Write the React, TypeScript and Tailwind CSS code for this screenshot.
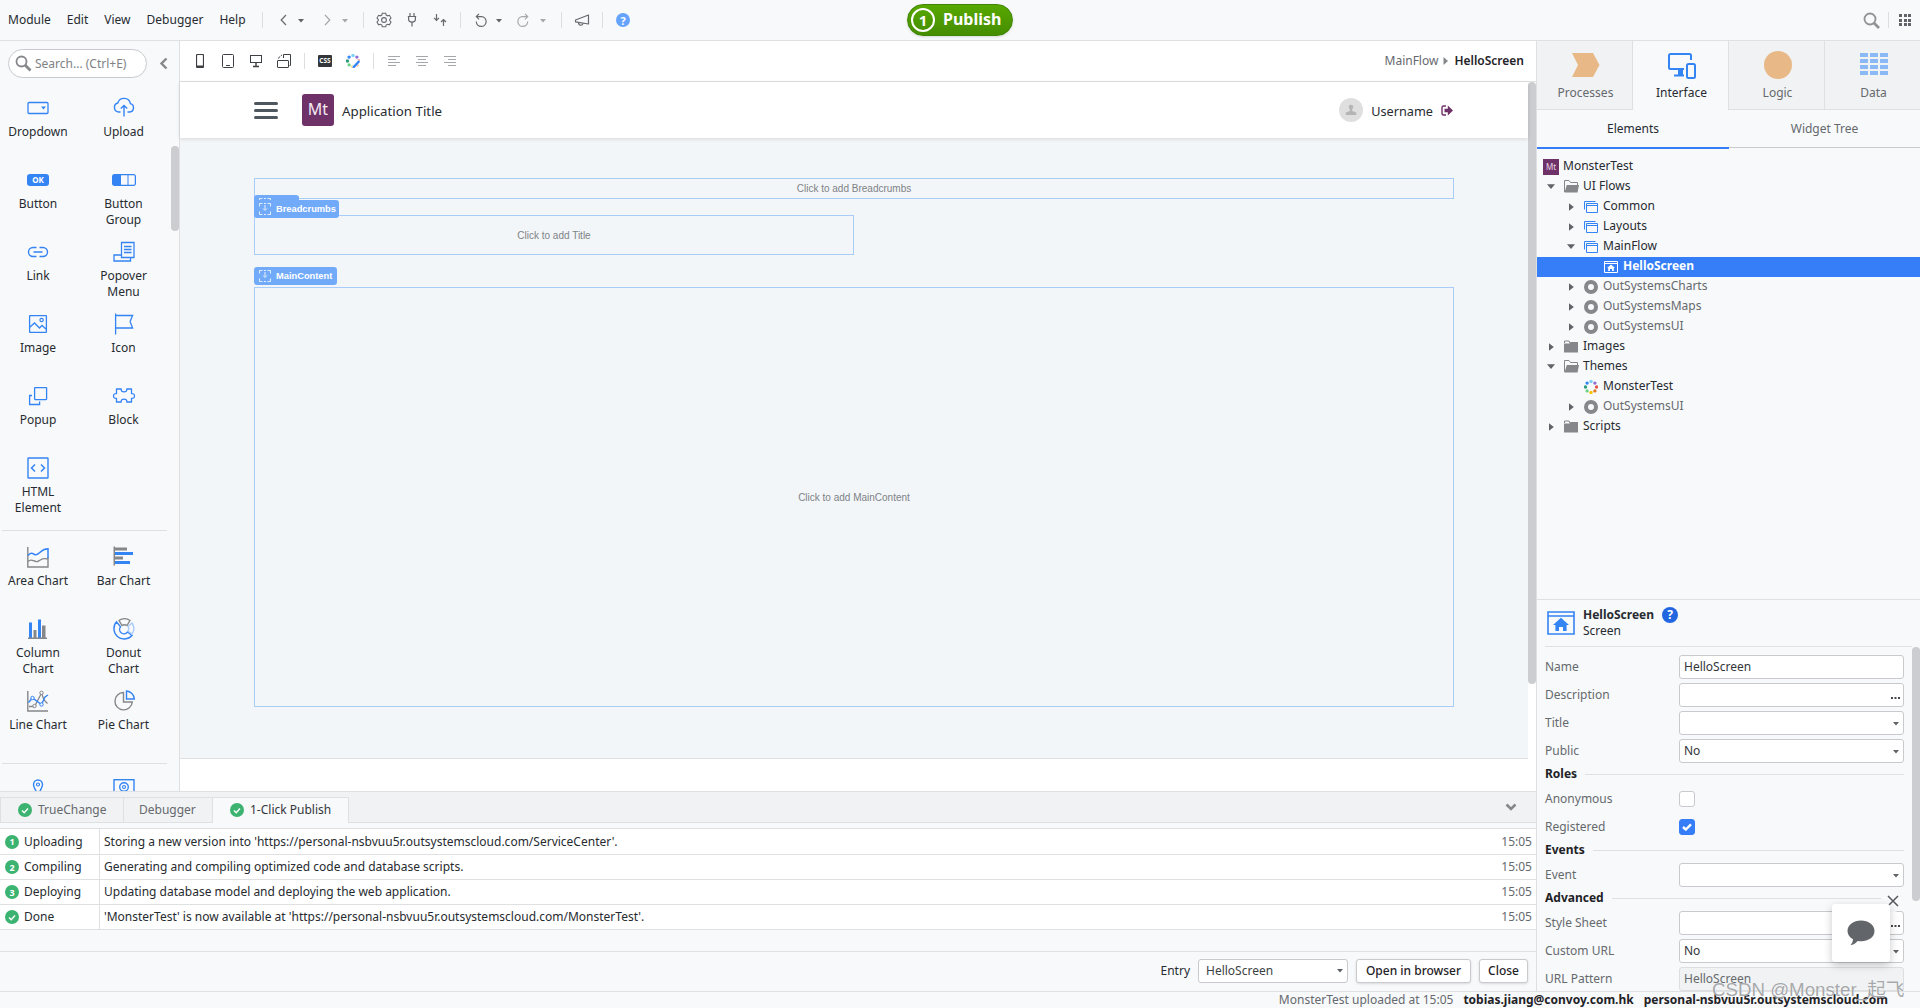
import React from "react";

type SvgProps = { w?: number; h?: number; box?: string; className?: string; children: React.ReactNode };

function Svg({ w = 24, h = 24, box, className = "", children }: SvgProps) {
  return (
    <svg width={w} height={h} viewBox={box ?? `0 0 ${w} ${h}`} fill="none" className={`block shrink-0 ${className}`}>
      {children}
    </svg>
  );
}

const BLUE = "#3584f4";
const GRAY = "#85878b";

/* ---------- top bar ---------- */

function Caret({ color = "#5f6368" }: { color?: string }) {
  return (
    <Svg w={6} h={5}>
      <path d="M0 1h6L3 4.600z" fill={color} />
    </Svg>
  );
}

function Slot({ w, children }: { w: string; children?: React.ReactNode }) {
  return <div className={`flex h-full shrink-0 items-center justify-center ${w}`}>{children}</div>;
}

function Sep() {
  return <div className="h-4 w-px shrink-0 bg-[#dcdee0]" />;
}

function UndoIcon({ color, flip }: { color: string; flip?: boolean }) {
  return (
    <Svg w={14} h={14} className={flip ? "-scale-x-100" : ""}>
      <path d="M5 .8L2.300 3.600 5 6.400M2.500 3.600H7.500a4.900 4.900 0 11-5.200 5" stroke={color} strokeWidth="1.200" />
    </Svg>
  );
}

function TopBar() {
  return (
    <header className="flex h-[41px] shrink-0 items-center border-b border-[#dee0e2] bg-[#f7f9fb]">
      <nav className="flex w-[262px] shrink-0 items-center gap-4 pb-px pl-2">
        <span>Module</span>
        <span>Edit</span>
        <span>View</span>
        <span>Debugger</span>
        <span>Help</span>
      </nav>
      <Sep />
      <div className="flex h-full w-[100px] items-center">
        <Slot w="w-[35px] pl-[5px]">
          <Svg w={7} h={12}><path d="M6 1L1.200 6 6 11" stroke="#66696d" strokeWidth="1.200" /></Svg>
        </Slot>
        <Caret />
        <Slot w="w-[38px] pl-[8px]">
          <Svg w={7} h={12}><path d="M1 1l4.800 5L1 11" stroke="#a5a7aa" strokeWidth="1.200" /></Svg>
        </Slot>
        <Caret color="#a5a7aa" />
      </div>
      <Sep />
      <div className="flex h-full w-[96px] items-center pl-[6px]">
        <Slot w="w-7">
          <Svg w={16} h={16}>
            <path d="M6.300 1.200h3.400l.5 1.900 1.300.7 1.900-.5 1.600 2.800-1.300 1.400v1.100l1.300 1.400-1.600 2.800-1.900-.5-1.300.7-.5 1.800H6.300l-.5-1.800-1.300-.7-1.900.5L1 10l1.300-1.400V7.500L1 6.100l1.600-2.800 1.900.5 1.300-.7z" stroke="#66696d" strokeWidth="1.100" />
            <circle cx="8" cy="8" r="2.400" stroke="#66696d" strokeWidth="1.100" />
          </Svg>
        </Slot>
        <Slot w="w-7">
          <Svg w={10} h={14}>
            <path d="M3 0v3.500M7 0v3.500M.8 3.500h8.400M1.600 3.500v3Q1.600 9 5 9.200 8.400 9 8.400 6.500v-3M5 9.200V13.500" stroke="#66696d" strokeWidth="1.200" />
          </Svg>
        </Slot>
        <Slot w="w-7">
          <Svg w={14} h={14}>
            <path d="M3.500 1v6M1 4.800L3.500 7.300 6 4.800M10.500 13V6.500M8 9l2.500-2.500L13 9" stroke="#66696d" strokeWidth="1.200" />
          </Svg>
        </Slot>
      </div>
      <Sep />
      <div className="flex h-full w-[100px] items-center">
        <Slot w="w-[35px] pl-[5px]"><UndoIcon color="#66696d" /></Slot>
        <Caret />
        <Slot w="w-[38px] pl-[3px]"><UndoIcon color="#a5a7aa" flip /></Slot>
        <Caret color="#a5a7aa" />
      </div>
      <Sep />
      <Slot w="w-10">
        <Svg w={16} h={14}>
          <path d="M1.500 7L14.500 2v9L1.500 8.800zM4.500 9.500c0 3.500 4 3.500 4.500.8" stroke="#66696d" strokeWidth="1.200" strokeLinejoin="round" />
        </Svg>
      </Slot>
      <Sep />
      <Slot w="w-10">
        <div className="flex size-[14px] items-center justify-center rounded-full bg-[#66a3fb] text-[11px] leading-none font-bold text-white">?</div>
      </Slot>
      <div className="ml-[264px] flex h-8 w-[106px] items-center rounded-full border border-[#418602] bg-gradient-to-b from-[#57a800] to-[#458d02] pl-[3px] text-white shadow-sm">
        <div className="flex size-6 items-center justify-center rounded-full border-2 border-white text-[15px] leading-none font-bold">1</div>
        <span className="ml-2 pb-[2px] text-[16px] leading-5 font-bold">Publish</span>
      </div>
      <div className="ml-auto flex items-center">
        <Svg w={17} h={17}>
          <circle cx="7" cy="7" r="5.500" stroke="#909295" strokeWidth="1.800" />
          <path d="M11 11l5 5" stroke="#909295" strokeWidth="2.600" />
        </Svg>
        <div className="mr-[10px] ml-2 h-4 w-px bg-[#dcdee0]" />
        <div className="mr-[9px] grid grid-cols-3 gap-[1.500px]">
          {Array.from({ length: 9 }, (_, i) => <i key={i} className="size-[3px] bg-[#606367]" />)}
        </div>
      </div>
    </header>
  );
}

/* ---------- widget palette ---------- */

const icons: Record<string, React.ReactNode> = {
  dropdown: (
    <Svg><rect x="2" y="6.500" width="20" height="11" rx="1" stroke={BLUE} strokeWidth="1.300" /><path d="M15 10.500h5L17.500 13.500z" fill={BLUE} /></Svg>
  ),
  upload: (
    <Svg><path d="M8.500 16H6.500a4.600 4.600 0 01-.7-9A6.500 6.500 0 0118.400 7.600 4.300 4.300 0 0117.700 16H15.500M12 20.500V9.800M8.800 12.600L12 9.500l3.200 3.100" stroke={BLUE} strokeWidth="1.400" /></Svg>
  ),
  button: (
    <div className="flex h-6 items-center"><div className="flex h-3 w-[22px] items-center justify-center rounded-[3px] bg-[#3584f4] text-[8px] leading-none font-bold text-white">OK</div></div>
  ),
  group: (
    <Svg><rect x=".6" y="6.600" width="22.800" height="10.800" rx="2" stroke={BLUE} strokeWidth="1.300" /><path d="M1 7h8v10H1zM15.500 7h1v10h-1z" fill={BLUE} /></Svg>
  ),
  link: (
    <Svg><path d="M10.500 7.500H7a4.500 4.500 0 000 9h3.500M13.500 7.500H17a4.500 4.500 0 010 9h-3.500M7.500 12h9" stroke={BLUE} strokeWidth="1.400" /></Svg>
  ),
  popover: (
    <Svg><path d="M9.500 2.500H22v15H9.500zM12 6.500h7.500M12 9.500h7.500M12 12.500h7.500M9.500 15H2v6h16.500v-3.500" stroke={BLUE} strokeWidth="1.300" /></Svg>
  ),
  image: (
    <Svg><rect x="3.600" y="3.600" width="16.800" height="16.800" rx=".5" stroke={BLUE} strokeWidth="1.300" /><path d="M4 15l4.500-4 5 5 2.500-2.500 4.500 4" stroke={BLUE} strokeWidth="1.300" /><circle cx="15.600" cy="8" r="1.700" stroke={BLUE} strokeWidth="1.200" /></Svg>
  ),
  flag: (
    <Svg><path d="M3.600 1.500v21M3.600 3.500h17l-2.500 6 2.500 6.500h-17" stroke={BLUE} strokeWidth="1.300" /></Svg>
  ),
  popup: (
    <Svg><rect x="8.600" y="3.600" width="12" height="12" rx=".5" stroke={BLUE} strokeWidth="1.300" /><path d="M6 11.500H3.600v9h10V17.500" stroke={BLUE} strokeWidth="1.300" /></Svg>
  ),
  block: (
    <Svg><path d="M4.500 5H9.200c-.3 2 1 2.800 2.800 2.800S15.100 7 14.800 5H19.500v4.600c2-.3 3 .9 3 2.400s-1 2.700-3 2.400V18H14.800c.3-2-1-2.800-2.800-2.800S8.900 16 9.200 18H4.500v-3.600c-2 .3-3-.9-3-2.400s1-2.700 3-2.400z" stroke={BLUE} strokeWidth="1.300" strokeLinejoin="round" /></Svg>
  ),
  html: (
    <Svg><rect x="2" y="2" width="20" height="20" rx=".5" stroke={BLUE} strokeWidth="1.400" /><path d="M9 8.500L5.500 12 9 15.500M15 8.500l3.500 3.500-3.500 3.500" stroke={BLUE} strokeWidth="1.500" /></Svg>
  ),
  area: (
    <Svg><path d="M1.800 2v20H22V12" stroke={GRAY} strokeWidth="1.400" /><path d="M2 10.500C4.500 7.500 6 8 8.500 9.500 13 11.500 13.500 4 22 3.800V13" stroke={BLUE} strokeWidth="1.500" /><path d="M2 16.500c4-4 5.500 1 9.500 0 4-1.500 4-4 10.500-2.500" stroke={GRAY} strokeWidth="1.400" /></Svg>
  ),
  bar: (
    <Svg><path d="M1.500 1.500h1.500v19H1.500zM3 2.500h12v3H3zM3 11.500h8v3H3z" fill={GRAY} /><path d="M3 7h18v3H3zM3 16h15v3H3z" fill={BLUE} /></Svg>
  ),
  column: (
    <Svg><path d="M3 5.500h3V21H3zM12 2.500h3V21h-3z" fill={BLUE} /><path d="M7.500 13h3v8h-3zM16 8.500h3.500V21H16zM2 20.500h19v1.500H2z" fill={GRAY} /></Svg>
  ),
  donut: (
    <Svg>
      <path d="M4.500 4.800A10 10 0 1020 18.500l-4.400-3.500A4.400 4.400 0 118.500 9.800z" stroke={BLUE} strokeWidth="1.400" />
      <path d="M7 3.500C10 1 15 1 18 3.500L15 8.500c-1.500-1-3.500-1-5 0z" stroke={GRAY} strokeWidth="1.400" />
      <path d="M20 6a9.500 9.500 0 010 11l-4-3c1-1.500 1-3 0-4.500z" stroke="#a9cbfb" strokeWidth="1.400" />
    </Svg>
  ),
  line: (
    <Svg><path d="M1.800 2v20H22" stroke={GRAY} strokeWidth="1.400" /><path d="M3 17.500h5.500L15.500 4 18 11l3.500 3.500" stroke={GRAY} strokeWidth="1.300" /><path d="M2.500 13.500L6.500 9l9 6.500L19 8l3-2" stroke={BLUE} strokeWidth="1.400" /><circle cx="6.500" cy="9" r="1.700" fill="#f7f9fb" stroke={BLUE} /><circle cx="15.500" cy="15.500" r="1.700" fill="#f7f9fb" stroke={BLUE} /><circle cx="8.500" cy="17" r="1.700" fill="#f7f9fb" stroke={GRAY} /><circle cx="15.500" cy="3.800" r="1.700" fill="#f7f9fb" stroke={GRAY} /></Svg>
  ),
  pie: (
    <Svg><path d="M11.500 3.500a8.700 8.700 0 108.800 9.500h-8.800z" stroke={GRAY} strokeWidth="1.400" /><path d="M14.500 2v8h7.800A8.500 8.500 0 0014.500 2z" stroke={BLUE} strokeWidth="1.400" /></Svg>
  ),
  pin: (
    <Svg><path d="M12 16c-3-4-4.500-7-4.500-9.500a4.500 4.500 0 019 0C16.500 9 15 12 12 16z" stroke={BLUE} strokeWidth="1.400" /><circle cx="12" cy="6.500" r="1.500" stroke={BLUE} strokeWidth="1.200" /></Svg>
  ),
  mapbox: (
    <Svg><rect x="2" y="1.700" width="20" height="17" stroke={BLUE} strokeWidth="1.400" /><circle cx="12" cy="9" r="4.300" stroke={BLUE} strokeWidth="1.400" /><circle cx="12" cy="9" r="1.500" stroke={BLUE} strokeWidth="1.200" /></Svg>
  ),
};

function Widget({ icon, label, tall }: { icon: string; label?: string; tall?: boolean }) {
  return (
    <div className={`flex flex-col items-center ${tall ? "h-[74px]" : "h-[72px]"}`}>
      {icons[icon]}
      {label && <span className="mt-1 max-w-[64px] text-center leading-4">{label}</span>}
    </div>
  );
}

const basic: [string, string][] = [
  ["dropdown", "Dropdown"], ["upload", "Upload"], ["button", "Button"], ["group", "Button Group"],
  ["link", "Link"], ["popover", "Popover Menu"], ["image", "Image"], ["flag", "Icon"],
  ["popup", "Popup"], ["block", "Block"],
];
const charts: [string, string][] = [
  ["area", "Area Chart"], ["bar", "Bar Chart"], ["column", "Column Chart"],
  ["donut", "Donut Chart"], ["line", "Line Chart"], ["pie", "Pie Chart"],
];

function Palette() {
  return (
    <aside className="relative flex w-[180px] shrink-0 flex-col overflow-hidden border-r border-[#dee0e2] bg-[#f7f9fb]">
      <div className="mt-2 ml-2 flex h-[29px] shrink-0 items-center">
        <div className="flex h-full w-[139px] items-center rounded-full border border-[#c8cacd] bg-white pl-[6px] text-[#808286]">
          <Svg w={17} h={17}>
            <circle cx="6.500" cy="6.500" r="5" stroke="#85878b" strokeWidth="1.800" />
            <path d="M10 10l5.500 5.500" stroke="#85878b" strokeWidth="2.800" />
          </Svg>
          <span className="ml-[3px]">Search... (Ctrl+E)</span>
        </div>
        <Svg w={9} h={13} className="ml-3"><path d="M7.500 1.500L2.500 6.500l5 5" stroke="#85878b" strokeWidth="2.400" /></Svg>
      </div>
      <div className="mt-[18px] grid shrink-0 grid-cols-[76px_95px]">
        {basic.map(([i, l]) => <Widget key={l} icon={i} label={l} />)}
        <Widget icon="html" label="HTML Element" tall />
      </div>
      <div className="ml-[2px] h-px w-[165px] shrink-0 bg-[#dee0e2]" />
      <div className="mt-[14px] grid shrink-0 grid-cols-[76px_95px]">
        {charts.map(([i, l]) => <Widget key={l} icon={i} label={l} />)}
      </div>
      <div className="mt-[2px] ml-[2px] h-px w-[165px] shrink-0 bg-[#dee0e2]" />
      <div className="mt-[14px] grid shrink-0 grid-cols-[76px_95px]">
        <Widget icon="pin" />
        <Widget icon="mapbox" />
      </div>
      <div className="absolute top-[105px] right-0 h-[85px] w-2 rounded-full bg-[#cbcdd0]" />
    </aside>
  );
}

/* ---------- canvas ---------- */

const wheel = ["#7fd1f5", "#8e6fd8", "#e5574b", "#e07b1f", "#fbc500", "#6fd28b", "#2e9d7a", "#3584f4"];

function ColorWheel({ pen = false }: { pen?: boolean }) {
  return (
    <Svg w={14} h={14}>
      {wheel.map((c, i) => {
        const a = (i * Math.PI) / 4;
        return <circle key={c} cx={7 + 5.500 * Math.sin(a)} cy={7 - 5.500 * Math.cos(a)} r={1.700} fill={c} />;
      })}
      {pen && <path d="M13.500 6.500L6.800 13.800" stroke="#fff" strokeWidth="4" />}
      {pen && <path d="M13.300 7L7 13.800" stroke="#3584f4" strokeWidth="2.400" />}
    </Svg>
  );
}

function AlignIcon({ kind }: { kind: "l" | "c" | "r" }) {
  const d = kind === "l" ? "M0 .5h12M0 3.500h8M0 6.500h12M0 9.500h8" : kind === "c" ? "M0 .5h12M2 3.500h8M0 6.500h12M2 9.500h8" : "M0 .5h12M4 3.500h8M0 6.500h12M4 9.500h8";
  return <Svg w={12} h={10}><path d={d} stroke="#a5a7aa" /></Svg>;
}

function DesignToolbar() {
  const s = "#3c3f43";
  return (
    <div className="flex h-[41px] shrink-0 items-center border-b border-[#dee0e2] bg-white pl-[6px]">
      <Slot w="w-7"><Svg w={8} h={14}><rect x=".5" y=".5" width="7" height="13" rx="1" stroke={s} strokeWidth="1.200" /><path d="M1 11.500h6v2H1z" fill={s} /></Svg></Slot>
      <Slot w="w-7"><Svg w={12} h={14}><rect x=".5" y=".5" width="11" height="13" rx="1" stroke={s} /><path d="M4 11.500h4" stroke={s} /></Svg></Slot>
      <Slot w="w-7"><Svg w={12} h={14}><rect x=".5" y="1.500" width="11" height="7" stroke={s} /><path d="M6 9v3M3 12.500h6" stroke={s} strokeWidth="1.400" /></Svg></Slot>
      <Slot w="w-7"><Svg w={14} h={14}><rect x=".5" y="6.500" width="11" height="7" rx=".5" stroke={s} /><path d="M6.500 4V.5h7V11.500H12.500" stroke={s} /><path d="M1 4.500L5 .8" stroke={s} strokeDasharray="3 1" /></Svg></Slot>
      <div className="mx-[6px] h-4 w-px bg-[#dcdee0]" />
      <Slot w="w-7"><div className="flex h-3 w-[14px] items-center justify-center rounded-[1px] bg-[#33363a] text-[6.500px] leading-none font-bold text-white">CSS</div></Slot>
      <Slot w="w-7"><ColorWheel pen /></Slot>
      <div className="mx-[6px] h-4 w-px bg-[#dcdee0]" />
      <Slot w="w-7"><AlignIcon kind="l" /></Slot>
      <Slot w="w-7"><AlignIcon kind="c" /></Slot>
      <Slot w="w-7"><AlignIcon kind="r" /></Slot>
      <div className="mr-3 ml-auto flex items-center pb-px">
        <span className="text-[#66696d]">MainFlow</span>
        <Svg w={5} h={8} className="mr-[6px] ml-[5px]"><path d="M.5 0v8L5 4z" fill="#85878b" /></Svg>
        <span className="font-semibold text-[#1f2226]">HelloScreen</span>
      </div>
    </div>
  );
}

function TargetIcon() {
  return (
    <Svg w={12} h={12}>
      <path d="M.5 3.500v-3h3M8.500.5h3v3M11.500 8.500v3h-3M3.500 11.500h-3v-3M6 2v5M4 5.500L6 7.500l2-2M5 .5h2M5 11.500h2" stroke="#e3eefe" />
    </Svg>
  );
}

function Tag({ text, w, className = "" }: { text?: string; w: string; className?: string }) {
  return (
    <div className={`flex h-[18px] items-center gap-[5px] rounded-[3px] bg-[#72aafa] pl-[5px] font-[Liberation_Sans,Arial,sans-serif] text-[9.300px] leading-none font-bold text-white ${w} ${className}`}>
      <TargetIcon />
      <span className="pt-px">{text}</span>
    </div>
  );
}

function Canvas() {
  const ph = "flex items-center justify-center border border-[#a8cdf8] font-[Liberation_Sans,Arial,sans-serif] text-[10px] text-[#808286]";
  return (
    <div className="flex min-h-0 flex-1 bg-white">
      <div className="flex min-w-0 flex-1 flex-col">
        <div className="z-10 flex h-[56px] shrink-0 items-center bg-white pr-[75px] pl-[74px] shadow-[0_1px_4px_rgba(0,0,0,0.12)]">
          <div className="flex w-6 flex-col gap-1">
            <i className="h-[3px] rounded-full bg-[#4f575e]" />
            <i className="h-[3px] rounded-full bg-[#4f575e]" />
            <i className="h-[3px] rounded-full bg-[#4f575e]" />
          </div>
          <div className="ml-6 flex size-8 items-center justify-center rounded-[3px] bg-[#6f3268] pb-[3px] text-[16px] leading-none text-[#f4eaf3]">Mt</div>
          <span className="ml-2 pt-[2px] text-[13.300px] text-[#272b30]">Application Title</span>
          <div className="ml-auto flex size-6 items-center justify-center overflow-hidden rounded-full bg-[#dfdfdf]">
            <Svg w={12} h={12}><circle cx="6" cy="3" r="2.300" fill="#b5b5b5" /><path d="M4.800 4h2.400v3l4 1.500V11H.8V8.500l4-1.500z" fill="#b5b5b5" /></Svg>
          </div>
          <span className="ml-2 pt-[2px] text-[12.700px] text-[#272b30]">Username</span>
          <Svg w={12} h={11} className="ml-2"><path d="M5 1H2.500Q1 1 1 2.500v6Q1 10 2.500 10H5" stroke="#6f3268" strokeWidth="1.400" /><path d="M3.500 3.700h3.300V.6L12 5.500 6.800 10.400V7.300H3.500z" fill="#6f3268" /></Svg>
        </div>
        <div className="h-[620px] shrink-0 bg-[#f2f6f9] pt-10 pl-[74px]">
          <div className={`${ph} h-[21px] w-[1200px]`}>Click to add Breadcrumbs</div>
          <div className="relative h-4 w-[600px] border-l border-[#a8cdf8]">
            <Tag w="w-[45px]" className="absolute -top-1 -left-px" />
            <Tag w="w-[85px]" text="Breadcrumbs" className="absolute top-px -left-px" />
          </div>
          <div className={`${ph} h-10 w-[600px] pt-[2px]`}>Click to add Title</div>
          <Tag w="w-[83px]" text="MainContent" className="mt-3" />
          <div className={`${ph} mt-[2px] h-[420px] w-[1200px] pt-[2px]`}>Click to add MainContent</div>
        </div>
        <div className="h-px shrink-0 bg-[#dee0e2]" />
      </div>
      <div className="w-2 shrink-0"><div className="h-[602px] rounded-full bg-[#cbcdd0]" /></div>
    </div>
  );
}

/* ---------- bottom panel ---------- */

function GreenDot({ text }: { text?: string }) {
  return (
    <div className="flex size-[14px] shrink-0 items-center justify-center rounded-full bg-[#3cb371] text-[9px] leading-none font-bold text-white">
      {text ?? <Svg w={8} h={7}><path d="M1 3.500l2.200 2.200L7 1.500" stroke="#fff" strokeWidth="1.400" /></Svg>}
    </div>
  );
}

const log: [string | undefined, string, string][] = [
  ["1", "Uploading", "Storing a new version into 'https://personal-nsbvuu5r.outsystemscloud.com/ServiceCenter'."],
  ["2", "Compiling", "Generating and compiling optimized code and database scripts."],
  ["3", "Deploying", "Updating database model and deploying the web application."],
  [undefined, "Done", "'MonsterTest' is now available at 'https://personal-nsbvuu5r.outsystemscloud.com/MonsterTest'."],
];

function Output() {
  return (
    <section className="flex h-[200px] shrink-0 flex-col border-t border-[#dee0e2] bg-[#f7f9fb]">
      <div className="flex h-[31px] shrink-0 items-end border-b border-[#dee0e2] bg-[#f0f2f4] text-[#66696d]">
        <div className="flex h-[25px] w-[124px] items-center gap-[6px] border-t border-r border-l border-[#dee0e2] pl-[17px]"><GreenDot />TrueChange</div>
        <div className="flex h-[25px] w-[88px] items-center border-t border-[#dee0e2] pl-[15px]">Debugger</div>
        <div className="-mb-px flex h-[26px] w-[137px] items-center gap-[6px] border-t border-r border-l border-[#dee0e2] bg-[#f7f9fb] pb-px pl-[17px] text-[#33363a]"><GreenDot />1-Click Publish</div>
        <Svg w={12} h={9} className="mr-[19px] mb-[10px] ml-auto"><path d="M1.500 1.500L6 6l4.500-4.500" stroke="#85878b" strokeWidth="2.600" /></Svg>
      </div>
      <div className="mt-[5px] border-t border-[#dee0e2] bg-white">
        {log.map(([n, a, b], i) => (
          <div key={a} className={`flex items-center border-b border-[#dee0e2] text-[#272b30] ${i === 0 ? "h-[26px]" : "h-[25px]"}`}>
            <div className="flex h-full w-[100px] shrink-0 items-center gap-[5px] border-r border-[#dee0e2] pl-[5px]"><GreenDot text={n} />{a}</div>
            <span className="ml-1">{b}</span>
            <span className="mr-1 ml-auto text-[#66696d]">15:05</span>
          </div>
        ))}
      </div>
      <div className="mt-[21px] flex h-10 shrink-0 items-center gap-2 border-t border-[#dee0e2] pr-2 pb-[2px]">
        <span className="ml-auto text-[#272b30]">Entry</span>
        <div className="flex h-6 w-[150px] items-center justify-between rounded-[3px] border border-[#c8cacd] bg-white pr-1 pl-[7px] text-[#3c3f43]">HelloScreen<Caret /></div>
        <button className="h-6 w-[115px] rounded-[3px] border border-[#c8cacd] bg-white font-medium whitespace-nowrap text-[#1f2226] shadow-sm">Open in browser</button>
        <button className="h-6 w-[49px] rounded-[3px] border border-[#c8cacd] bg-white font-medium text-[#1f2226] shadow-sm">Close</button>
      </div>
    </section>
  );
}

/* ---------- right panel ---------- */

function ModuleTab({ label, active, children }: { label: string; active?: boolean; children: React.ReactNode }) {
  return (
    <div className={`flex h-[69px] w-24 flex-col items-center border-[#dee0e2] pt-[10px] pl-[2px] ${active ? "border-r text-[#272b30]" : "border-r border-b bg-[#f0f2f4] text-[#66696d]"}`}>
      {children}
      <span className="mt-[2px] leading-4">{label}</span>
    </div>
  );
}

function Arrow({ open }: { open?: boolean }) {
  return open
    ? <Svg w={8} h={5}><path d="M0 .3h8L4 5z" fill="#5f6368" /></Svg>
    : <Svg w={8} h={8}><path d="M2 .3v7.400L6.800 4z" fill="#5f6368" /></Svg>;
}

function TreeIcon({ kind, big }: { kind: string; big?: boolean }) {
  if (kind === "mt") return <div className="flex size-4 shrink-0 items-center justify-center bg-[#6f3268] text-[8px] leading-none text-[#e8d8e6]">Mt</div>;
  if (kind === "open") return <Svg w={16} h={13} className="-mr-[2px]"><path d="M.5 12V.5h4.500L6.500 2.500h7v3" stroke={GRAY} /><path d="M.5 12.500L2.800 5H15l-1.500 7.500z" fill={GRAY} /></Svg>;
  if (kind === "folder") return <Svg w={14} h={13}><path d="M.5 3V1h4.500l1 2" stroke={GRAY} /><path d="M0 3.500h5.500l1-1.500H14V12.500H0z" fill={GRAY} /></Svg>;
  if (kind === "flow") return <Svg w={14} h={12}><path d="M.5 8.500V.5H11.500M2.500 2.500h11v9h-11zM2.500 4.500h11" stroke={BLUE} /></Svg>;
  if (kind === "ring") return <Svg w={14} h={14}><circle cx="7" cy="7" r="5" stroke="#85878b" strokeWidth="4" /></Svg>;
  if (kind === "theme") return <ColorWheel />;
  const c = big ? BLUE : "#fff";
  return (
    <Svg w={big ? 28 : 14} h={big ? 24 : 12} box="0 0 14 12">
      <path d="M.5.5h13v11H.5zM.5 2.500h13" stroke={c} strokeWidth={big ? 0.8 : 1} />
      <path d="M7 3.400L11 7H9.800v3H8V8H6v2H4.200V7H3z" fill={c} />
    </Svg>
  );
}

type Row = { t: string; lv: number; icon: string; arrow?: "o" | "c"; dim?: boolean; sel?: boolean };
const tree: Row[] = [
  { t: "MonsterTest", lv: -1, icon: "mt" },
  { t: "UI Flows", lv: 0, icon: "open", arrow: "o" },
  { t: "Common", lv: 1, icon: "flow", arrow: "c" },
  { t: "Layouts", lv: 1, icon: "flow", arrow: "c" },
  { t: "MainFlow", lv: 1, icon: "flow", arrow: "o" },
  { t: "HelloScreen", lv: 2, icon: "screen", sel: true },
  { t: "OutSystemsCharts", lv: 1, icon: "ring", arrow: "c", dim: true },
  { t: "OutSystemsMaps", lv: 1, icon: "ring", arrow: "c", dim: true },
  { t: "OutSystemsUI", lv: 1, icon: "ring", arrow: "c", dim: true },
  { t: "Images", lv: 0, icon: "folder", arrow: "c" },
  { t: "Themes", lv: 0, icon: "open", arrow: "o" },
  { t: "MonsterTest", lv: 1, icon: "theme" },
  { t: "OutSystemsUI", lv: 1, icon: "ring", arrow: "c", dim: true },
  { t: "Scripts", lv: 0, icon: "folder", arrow: "c" },
];
const indent: Record<string, string> = { "-1": "pl-[6px]", "0": "pl-[10px]", "1": "pl-[30px]", "2": "pl-[50px]" };

function TreeRow({ r }: { r: Row }) {
  return (
    <div className={`flex h-5 items-center pb-px ${indent[String(r.lv)]} ${r.sel ? "bg-[#357ef8] font-bold text-white" : r.dim ? "text-[#66696d]" : "text-[#272b30]"}`}>
      {r.lv >= 0 && <div className="mr-[9px] w-2 shrink-0">{r.arrow && <Arrow open={r.arrow === "o"} />}</div>}
      <TreeIcon kind={r.icon} />
      <span className={`pb-[2px] leading-[17px] ${r.lv < 0 ? "ml-1" : "ml-[5px]"}`}>{r.t}</span>
    </div>
  );
}

function Field({ label, value, end, ro }: { label: string; value?: string; end?: "dots" | "caret"; ro?: boolean }) {
  return (
    <div className="mb-1 flex h-6 shrink-0 items-center">
      <span className="w-[134px] shrink-0 pb-px text-[#66696d]">{label}</span>
      <div className={`flex h-6 w-[225px] items-center justify-between rounded-[3px] border pr-1 pb-px pl-1 ${ro ? "border-[#dcdee0] bg-[#f0f2f4] text-[#66696d]" : "border-[#c8cacd] bg-white text-[#33363a]"}`}>
        <span>{value}</span>
        {end === "caret" && <div className="pt-[2px]"><Caret /></div>}
        {end === "dots" && <Svg w={10} h={8} className="-mr-[2px]"><path d="M0 6h2v2H0zM3.500 6h2v2h-2zM7 6h2v2H7z" fill="#44474b" /></Svg>}
      </div>
    </div>
  );
}

function Group({ label }: { label: string }) {
  return (
    <div className="-mt-px mb-[5px] flex h-4 w-[359px] shrink-0 items-center gap-2">
      <span className="leading-4 font-bold text-[#1f2226]">{label}</span>
      <div className="h-px flex-1 bg-[#dee0e2]" />
    </div>
  );
}

function Check({ label, on }: { label: string; on?: boolean }) {
  return (
    <div className="mb-1 flex h-6 shrink-0 items-center">
      <span className="w-[134px] text-[#66696d]">{label}</span>
      <div className={`flex size-4 items-center justify-center rounded-[3px] border ${on ? "border-[#357ef8] bg-[#357ef8]" : "border-[#c8cacd] bg-white"}`}>
        {on && <Svg w={10} h={8}><path d="M1 4l2.800 2.500L9 1.300" stroke="#fff" strokeWidth="2.400" /></Svg>}
      </div>
    </div>
  );
}

function RightPanel() {
  return (
    <aside className="flex w-[383px] shrink-0 flex-col bg-[#f7f9fb]">
      <div className="flex h-[69px] shrink-0 overflow-hidden">
        <ModuleTab label="Processes"><Svg w={28} h={32}><path d="M0 2h21l6.500 12L21 26H0l6-12z" fill="#e8b987" /></Svg></ModuleTab>
        <ModuleTab label="Interface" active>
          <Svg w={28} h={32}><path d="M16 18H2.500a1.500 1.500 0 01-1.500-1.500V4.500A1.500 1.500 0 012.500 3h19A1.500 1.500 0 0123 4.500V9M6 24.500h10" stroke={BLUE} strokeWidth="2" /><path d="M10 18h5v6h-5z" fill={BLUE} /><rect x="19" y="13" width="8" height="14" rx="1.500" stroke={BLUE} strokeWidth="2" /></Svg>
        </ModuleTab>
        <ModuleTab label="Logic"><Svg w={28} h={32}><circle cx="14" cy="14" r="14" fill="#e8b987" /></Svg></ModuleTab>
        <div className="-mr-px flex">
          <ModuleTab label="Data">
            <Svg w={28} h={32}>{[0, 1, 2, 3].map((y) => [0, 1, 2].map((x) => <rect key={`${x}${y}`} x={x * 10} y={2 + y * 6} width="8" height="4" fill="#8ab9f5" />))}</Svg>
          </ModuleTab>
        </div>
      </div>
      <div className="flex h-[39px] shrink-0 text-center leading-[37px]">
        <div className="w-48 border-b-2 border-[#357ef8] text-[#272b30]">Elements</div>
        <div className="mb-px flex-1 border-b border-[#c8cacd] text-[#66696d]">Widget Tree</div>
      </div>
      <div className="h-[451px] shrink-0 border-b border-[#dee0e2] pt-2">
        {tree.map((r, i) => <TreeRow key={i} r={r} />)}
      </div>
      <div className="flex h-[46px] shrink-0 pt-[11px] pl-[10px]">
        <TreeIcon kind="screen" big />
        <div className="-mt-1 ml-2 leading-4 text-[#272b30]">
          <div className="flex items-center gap-2 font-bold">
            HelloScreen
            <div className="flex size-4 items-center justify-center rounded-full bg-[#2367e0] text-[12px] leading-none text-white">?</div>
          </div>
          <div>Screen</div>
        </div>
      </div>
      <div className="ml-2 h-px w-[367px] shrink-0 bg-[#dee0e2]" />
      <div className="relative flex min-h-0 flex-1 flex-col overflow-hidden pt-2 pl-2">
        <Field label="Name" value="HelloScreen" />
        <Field label="Description" end="dots" />
        <Field label="Title" end="caret" />
        <Field label="Public" value="No" end="caret" />
        <Group label="Roles" />
        <Check label="Anonymous" />
        <Check label="Registered" on />
        <Group label="Events" />
        <Field label="Event" end="caret" />
        <Group label="Advanced" />
        <Field label="Style Sheet" end="dots" />
        <Field label="Custom URL" value="No" end="caret" />
        <Field label="URL Pattern" value="HelloScreen" ro />
        <div className="absolute top-0 right-0 h-[254px] w-2 rounded-full bg-[#cbcdd0]" />
      </div>
    </aside>
  );
}

function ChatWidget() {
  return (
    <>
      <div className="absolute top-[889px] left-[1881px] flex size-[23px] items-center justify-center rounded-full bg-[#f7f9fb]">
        <Svg w={12} h={12}><path d="M1 1l10 10M11 1L1 11" stroke="#55585c" strokeWidth="1.500" /></Svg>
      </div>
      <div className="absolute top-[904px] left-[1832px] flex size-[58px] items-center justify-center rounded-[3px] bg-white shadow-[0_3px_8px_rgba(0,0,0,0.22)]">
        <Svg w={28} h={26}><path d="M14 .5C21.500.5 27.500 5 27.500 11S21.500 21.300 14 21.300c-1.200 0-2.300-.1-3.400-.3C8.500 23.500 6 25 3.500 25.300 5 23.500 6 21.500 6 19.300 2.700 17.500.5 14.500.5 11 .5 5 6.500.5 14 .5z" fill="#62666a" /></Svg>
      </div>
    </>
  );
}

export default function App() {
  return (
    <div className="relative flex h-[1008px] w-[1920px] flex-col overflow-hidden bg-[#f7f9fb] font-[Noto_Sans,sans-serif] text-[12px] leading-4 text-[#272b30]">
      <TopBar />
      <div className="flex h-[950px] shrink-0">
        <main className="flex w-[1537px] shrink-0 flex-col border-r border-[#dee0e2]">
          <div className="flex h-[750px] shrink-0">
            <Palette />
            <div className="flex min-w-0 flex-1 flex-col">
              <DesignToolbar />
              <Canvas />
            </div>
          </div>
          <Output />
        </main>
        <RightPanel />
      </div>
      <footer className="flex h-[17px] shrink-0 items-center justify-end gap-[10px] border-t border-[#dee0e2] pr-8 leading-4">
        <span className="text-[#66696d]">MonsterTest uploaded at 15:05</span>
        <span className="font-bold text-[#1f2226]">tobias.jiang@convoy.com.hk</span>
        <span className="font-bold text-[#1f2226]">personal-nsbvuu5r.outsystemscloud.com</span>
      </footer>
      <ChatWidget />
      <div className="absolute top-[978px] left-[1712px] font-[Liberation_Sans,Noto_Sans_CJK_SC,sans-serif] text-[18.700px] leading-6 whitespace-nowrap text-[#8f9194]/80 [text-shadow:0_0_1px_#fff]">CSDN @Monster_起飞</div>
    </div>
  );
}
